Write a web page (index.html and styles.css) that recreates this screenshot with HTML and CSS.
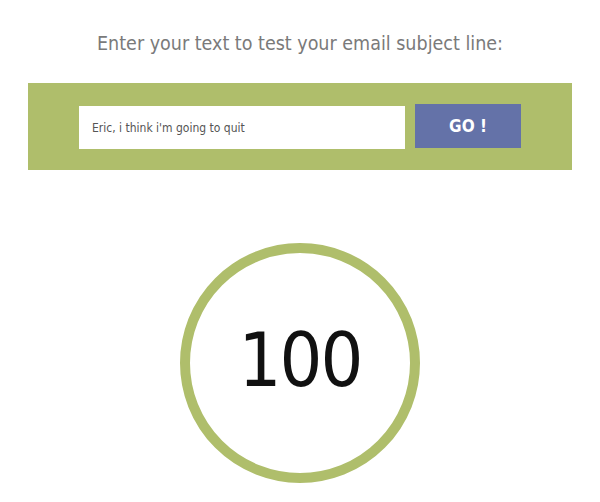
FILE: index.html
```html
<!DOCTYPE html>
<html>
<head>
<meta charset="utf-8">
<link rel="stylesheet" href="styles.css">
</head>
<body>
<main class="page">
  <h1 class="title">Enter your text to test your email subject line:</h1>
  <section class="band">
    <div class="field">Eric, i think i'm going to quit</div>
    <button class="go">GO !</button>
  </section>
  <div class="score">
    <span class="score-num">100</span>
  </div>
</main>
</body>
</html>
```

FILE: styles.css
```css
html, body {
  margin: 0;
  padding: 0;
  background: #ffffff;
}
.page {
  width: 600px;
  display: flex;
  flex-direction: column;
  align-items: center;
  font-family: "DejaVu Sans Condensed", "DejaVu Sans", sans-serif;
}
.title {
  margin: 31px 0 0 0;
  font-size: 19.5px;
  line-height: 26px;
  font-weight: normal;
  color: #7a7a7a;
}
.band {
  margin-top: 26px;
  width: 544px;
  height: 87px;
  background: #afbe6b;
  display: flex;
  justify-content: center;
  align-items: center;
  gap: 10px;
}
.field {
  width: 326px;
  height: 43px;
  box-sizing: border-box;
  background: #ffffff;
  padding-left: 13px;
  display: flex;
  align-items: center;
  font-size: 12px;
  color: #555555;
  margin-top: 2px;
}
.go {
  width: 106px;
  height: 44px;
  border: 0;
  margin: 0;
  padding: 0;
  background: #6472a8;
  color: #ffffff;
  font-family: inherit;
  font-size: 17px;
  font-weight: bold;
  letter-spacing: 0;
  margin-top: -2px;
}
.score {
  margin-top: 73px;
  width: 240px;
  height: 240px;
  box-sizing: border-box;
  border: 10px solid #afbe6b;
  border-radius: 50%;
  display: flex;
  justify-content: center;
  align-items: center;
}
.score-num {
  font-size: 75px;
  line-height: 1;
  color: #111111;
  letter-spacing: -2px;
  margin-top: -6px;
}
```
